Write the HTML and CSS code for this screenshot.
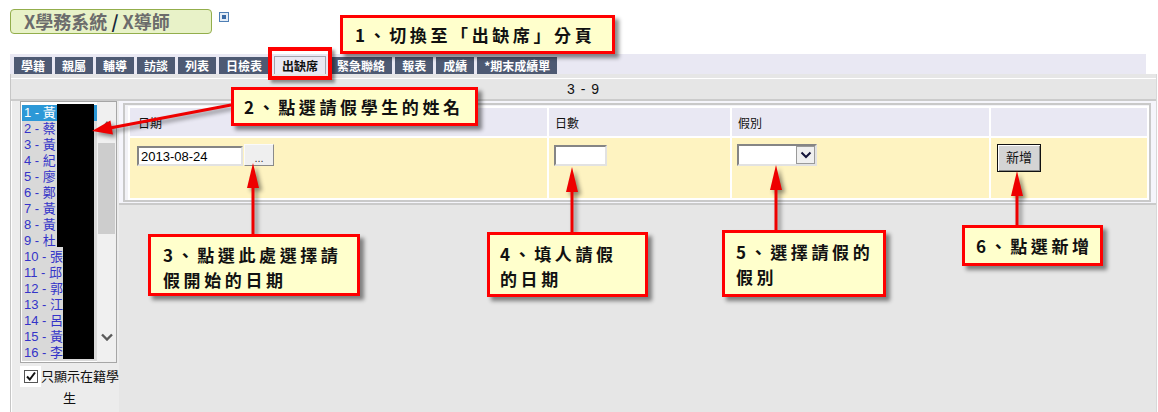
FILE: index.html
```html
<!DOCTYPE html>
<html lang="zh-Hant">
<head>
  <meta charset="UTF-8" />
  <meta name="viewport" content="width=device-width, initial-scale=1" />
  <title>X學務系統 - 出缺席</title>
  <link rel="stylesheet" href="styles.css">
</head>
<body>

  <div class="top">
    <div class="brand">X學務系統 <span class="slash">/</span> X導師</div>
    <span class="mini"><span></span></span>
  </div>

  <ul class="tabs">
    <li>學籍</li>
    <li>親屬</li>
    <li>輔導</li>
    <li>訪談</li>
    <li>列表</li>
    <li>日檢表</li>
    <li class="on">出缺席</li>
    <li>緊急聯絡</li>
    <li>報表</li>
    <li>成績</li>
    <li>*期末成績單</li>
  </ul>

  <div class="panel">
    <div class="range">3 - 9</div>

    <div class="work">
      <div class="side">
        <div class="listbox">
          <ul class="names">
            <li class="sel">1 - 黃</li>
            <li>2 - 蔡</li>
            <li>3 - 黃</li>
            <li>4 - 紀</li>
            <li>5 - 廖</li>
            <li>6 - 鄭</li>
            <li>7 - 黃</li>
            <li>8 - 黃</li>
            <li>9 - 杜</li>
            <li>10 - 張</li>
            <li>11 - 邱</li>
            <li>12 - 郭</li>
            <li>13 - 江</li>
            <li>14 - 呂</li>
            <li>15 - 黃</li>
            <li>16 - 李</li>
          </ul>
          <div class="scroll">
            <svg class="up" width="10" height="6" viewBox="0 0 10 6"><path d="M0 6 L5 0 L10 6 Z" fill="#606060"/></svg>
            <span class="thumb"></span>
            <span class="fill"></span>
            <svg class="down" width="12" height="8" viewBox="0 0 12 8"><path d="M1 1.5 L6 6.5 L11 1.5" fill="none" stroke="#5a5a5a" stroke-width="2.4"/></svg>
          </div>
          <!-- nomes ocultados no print original -->
          <div class="hide hide-a"></div>
          <div class="hide hide-b"></div>
        </div>
        <div class="only">
          <span class="check"><svg width="12" height="11" viewBox="0 0 12 11"><path d="M2 5.5 L4.8 8.5 L10 1.5" fill="none" stroke="#111" stroke-width="2"/></svg></span>只顯示在籍學生
        </div>
      </div>

      <div class="main">
        <div class="area">
          <div class="frame">
            <table class="form">
              <colgroup>
                <col style="width: 417px">
                <col style="width: 181px">
                <col style="width: 257px">
                <col style="width: 156px">
              </colgroup>
              <thead>
                <tr>
                  <th class="first">日期</th>
                  <th>日數</th>
                  <th>假別</th>
                  <th></th>
                </tr>
              </thead>
              <tbody>
                <tr>
                  <td>
                    <div class="date">
                      <input type="text" class="field date-field" value="2013-08-24">
                      <button class="pick">...</button>
                    </div>
                  </td>
                  <td><input type="text" class="field days"></td>
                  <td>
                    <div class="combo">
                      <span class="combo-text"></span>
                      <span class="combo-btn"><svg width="12" height="8" viewBox="0 0 12 8"><path d="M1.5 1.5 L6 6 L10.5 1.5" fill="none" stroke="#15153a" stroke-width="2"/></svg></span>
                    </div>
                  </td>
                  <td><button class="add">新增</button></td>
                </tr>
              </tbody>
            </table>
          </div>
        </div>
      </div>
    </div>
  </div>

  <div class="mark"></div>

  <svg class="arrows" width="1158" height="412" viewBox="0 0 1158 412">
    <g stroke="#ee0000" stroke-width="3" fill="none">
      <line x1="231" y1="105" x2="110" y2="128"/>
      <line x1="253" y1="234" x2="253" y2="184"/>
      <line x1="572" y1="232" x2="572" y2="188"/>
      <line x1="776" y1="230" x2="776" y2="186"/>
      <line x1="1017" y1="225" x2="1017" y2="192"/>
    </g>
    <g fill="#ee0000">
      <polygon points="92,131 113,134.5 110.4,120.4"/>
      <polygon points="253,163 247,188 259,188"/>
      <polygon points="572,167 566,192 578,192"/>
      <polygon points="776,165 770,190 782,190"/>
      <polygon points="1017,171 1011,196 1023,196"/>
    </g>
  </svg>

  <div class="note n1">1、切換至「出缺席」分頁</div>
  <div class="note n2">2、點選請假學生的姓名</div>
  <div class="note n3">3、點選此處選擇請<br>假開始的日期</div>
  <div class="note n4">4、填人請假<br>的日期</div>
  <div class="note n5">5、選擇請假的<br>假別</div>
  <div class="note n6">6、點選新增</div>

</body>
</html>
```

FILE: styles.css
```css
body {
  margin: 0;
  width: 1158px;
  height: 412px;
  overflow: hidden;
  position: relative;
  background: white;
  font-family: "Liberation Sans", "Noto Sans CJK TC", sans-serif;
  font-size: 13px;
  color: #222;
}

.top {
  height: 54px;
  box-sizing: border-box;
  padding: 9px 0 0 10px;
  display: flex;
  align-items: flex-start;
}

.brand {
  width: 202px;
  height: 25px;
  box-sizing: border-box;
  border: 1px solid #93ae4c;
  border-radius: 4px;
  background: #e8f2c8;
  padding-left: 13px;
  font-family: "Noto Sans CJK TC", sans-serif;
  font-size: 18px;
  font-weight: bold;
  line-height: 23px;
  color: #6c6c6c;
  white-space: nowrap;
}

.brand .slash {
  color: #17283a;
}

.mini {
  width: 8px;
  height: 8px;
  margin: 3px 0 0 7px;
  border: 1px solid #4f7fb5;
  background: #e4edf7;
  display: flex;
  align-items: center;
  justify-content: center;
}

.mini span {
  width: 4px;
  height: 4px;
  background: #3a6aa5;
}

.tabs {
  list-style: none;
  margin: 0 0 0 10px;
  padding: 0 0 0 4px;
  width: 1136px;
  height: 20px;
  box-sizing: border-box;
  background: #e9e8f3;
  display: flex;
  align-items: flex-end;
  gap: 3px;
}

.tabs li {
  height: 17px;
  line-height: 17px;
  padding: 0 7px;
  background: #4e5a73;
  color: white;
  font-family: "Noto Sans CJK TC", sans-serif;
  font-size: 12px;
  font-weight: bold;
  white-space: nowrap;
}

.tabs li.on {
  background: #e9e8f3;
  color: #111;
  border: 1px solid #a3a3ad;
  border-bottom: none;
  margin-left: 2px;
  margin-right: 1px;
}

.panel {
  margin-left: 10px;
  width: 1147px;
  height: 338px;
  box-sizing: border-box;
  background: #e6e6e6;
  border-left: 1px solid #c6c6c6;
  border-right: 1px solid #d8d8d8;
  padding-top: 4px;
}

.range {
  height: 20px;
  border-top: 1px solid white;
  border-bottom: 2px solid #cbcbcb;
  text-align: center;
  line-height: 20px;
  font-size: 14px;
  letter-spacing: 1px;
  color: #111;
}

.work {
  display: flex;
  height: 313px;
}

.side {
  width: 109px;
  box-sizing: border-box;
  border-left: 1px solid white;
  padding-left: 8px;
  background: #ececec;
}

.listbox {
  position: relative;
  width: 97px;
  height: 262px;
  box-sizing: border-box;
  border: 1px solid #a6a6a6;
  background: white;
  padding: 2px 0 0 1px;
  display: flex;
}

.names {
  list-style: none;
  margin: 0;
  padding: 0;
  width: 75px;
  height: 256px;
  margin-top: 1px;
  background: #d9d9d9;
  overflow: hidden;
}

.names li {
  height: 16px;
  line-height: 16px;
  padding-left: 2px;
  color: #3434c8;
  white-space: nowrap;
}

.names li.sel {
  background: #2c98d7;
  color: white;
}

.scroll {
  width: 19px;
  margin-top: -2px;
  height: 260px;
  background: #f0f0f0;
  display: flex;
  flex-direction: column;
  align-items: center;
}

.scroll .up {
  margin-top: 19px;
}

.scroll .thumb {
  width: 17px;
  height: 91px;
  margin-top: 16px;
  background: #cdcdcd;
}

.scroll .fill {
  flex: 1;
}

.scroll .down {
  margin-bottom: 21px;
}

.hide {
  position: absolute;
  background: black;
}

.hide-a {
  left: 36px;
  top: 2px;
  width: 37px;
  height: 143px;
}

.hide-b {
  left: 42px;
  top: 145px;
  width: 31px;
  height: 112px;
}

.only {
  margin-top: 2px;
  text-align: center;
  line-height: 22px;
  font-family: "Noto Sans CJK TC", sans-serif;
  font-size: 13px;
  color: #111;
}

.check {
  display: inline-flex;
  width: 21px;
  height: 21px;
  vertical-align: middle;
  background: white;
  align-items: center;
  justify-content: center;
  margin-top: -2px;
}

.check svg {
  width: 12px;
  height: 11px;
  border: 1px solid #555;
  background: white;
}

.main {
  flex: 1;
}

.area {
  padding: 2px 5px 1px 4px;
  background: #f5f5fb;
  border-bottom: 2px solid #cacaca;
}

.frame {
  border: 2px solid #c9c9c9;
  background: #f2f2f6;
  padding: 1px 0 0 3px;
}

.form {
  width: 100%;
  table-layout: fixed;
  border-collapse: separate;
  border-spacing: 2px;
  background: white;
}

.form th {
  height: 28px;
  padding: 0 0 0 6px;
  background: #e9e8f3;
  text-align: left;
  font-family: "Noto Sans CJK TC", sans-serif;
  font-size: 12px;
  font-weight: normal;
  color: #111;
}

.form th.first {
  padding-left: 8px;
}

.form td {
  height: 60px;
  box-sizing: border-box;
  padding: 6px 0 0 5px;
  vertical-align: top;
  background: #fef3c1;
}

.date {
  display: flex;
  align-items: flex-end;
  margin-left: 2px;
}

.field {
  box-sizing: border-box;
  height: 20px;
  border: 2px solid;
  border-color: #858585 #e2e2e2 #e2e2e2 #858585;
  background: white;
  padding: 0 2px;
  font-family: "Liberation Sans", sans-serif;
  font-size: 13px;
  color: black;
  outline: none;
}

.date-field {
  width: 106px;
}

.days {
  width: 53px;
  height: 21px;
  margin-top: 1px;
}

.pick {
  width: 30px;
  height: 22px;
  margin-left: 1px;
  box-sizing: border-box;
  border: 1px solid;
  border-color: #fafafa #8a8a8a #8a8a8a #fafafa;
  background: #efefef;
  padding: 6px 0 0;
  line-height: 12px;
  font-size: 11px;
  color: #333;
}

.combo {
  width: 80px;
  height: 22px;
  box-sizing: border-box;
  border: 2px solid;
  border-color: #858585 #e2e2e2 #e2e2e2 #858585;
  background: white;
  display: flex;
  justify-content: flex-end;
}

.combo-btn {
  width: 19px;
  box-sizing: border-box;
  border: 1px solid #9a9a9a;
  background: #f0f0f0;
  display: flex;
  align-items: center;
  justify-content: center;
}

.add {
  width: 44px;
  height: 28px;
  margin-left: 1px;
  box-sizing: border-box;
  border: 1px solid #111;
  background: #d4d4d4;
  box-shadow: inset 1px 1px 0 #fff, inset -1px -1px 0 #888;
  padding: 0 0 3px;
  font-family: "Noto Sans CJK TC", sans-serif;
  font-size: 13px;
  color: #111;
}

.mark {
  position: absolute;
  left: 268px;
  top: 47px;
  width: 64px;
  height: 33px;
  box-sizing: border-box;
  border: 4px solid #ff0000;
  box-shadow: 3px 3px 3px rgba(0,0,0,0.4);
}

.arrows {
  position: absolute;
  left: 0;
  top: 0;
  filter: drop-shadow(3px 3px 2px rgba(0,0,0,0.45));
}

.note {
  position: absolute;
  box-sizing: border-box;
  background: #ffffcc;
  border: 3px solid #ff0000;
  box-shadow: 4px 4px 4px rgba(0,0,0,0.45);
  font-family: "Noto Sans CJK TC", sans-serif;
  font-size: 17px;
  font-weight: bold;
  letter-spacing: 3.6px;
  color: #111;
  white-space: nowrap;
  line-height: 25px;
}

.n1 {
  left: 340px;
  top: 15px;
  width: 275px;
  height: 39px;
  padding-left: 12px;
  line-height: 33px;
}

.n2 {
  left: 231px;
  top: 87px;
  width: 247px;
  height: 39px;
  padding-left: 10px;
  line-height: 33px;
}

.n3 {
  left: 148px;
  top: 234px;
  width: 212px;
  height: 62px;
  padding: 5px 0 0 12px;
}

.n4 {
  left: 487px;
  top: 232px;
  width: 161px;
  height: 65px;
  padding: 6px 0 0 10px;
}

.n5 {
  left: 722px;
  top: 230px;
  width: 164px;
  height: 67px;
  padding: 6px 0 0 11px;
}

.n6 {
  left: 962px;
  top: 225px;
  width: 141px;
  height: 41px;
  padding-left: 11px;
  line-height: 35px;
}
```
